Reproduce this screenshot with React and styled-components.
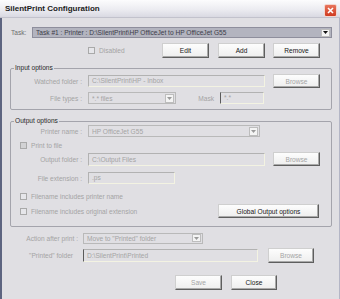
import styled, { createGlobalStyle } from 'styled-components'

const GlobalStyle = createGlobalStyle`
  html, body {
    margin: 0;
    padding: 0;
    background: #e0dfe3;
  }
  body {
    font-family: 'Liberation Sans', Arial, sans-serif;
  }
`

const Window = styled.div`
  width: 340px;
  height: 299px;
  display: flex;
  flex-direction: column;
  background: #e0dfe3;
  overflow: hidden;
  font-size: 6.6px;
`

const TitleBar = styled.div`
  height: 18px;
  flex: none;
  box-sizing: border-box;
  display: flex;
  align-items: center;
  justify-content: space-between;
  padding: 0 3px 0 5px;
  background: linear-gradient(#fcfcfd, #ececf1 55%, #d9d9e2);
  border-bottom: 1px solid #c2c2cc;
`

const Title = styled.span`
  font-size: 8px;
  font-weight: bold;
  color: #1c1c1c;
`

const CloseBox = styled.div`
  width: 13px;
  height: 13px;
  margin-top: 3px;
  box-sizing: border-box;
  border: 1px solid #f3d6cf;
  border-radius: 2px;
  background: linear-gradient(#e8745c, #cf3b20);
  display: flex;
  align-items: center;
  justify-content: center;
`

const Body = styled.div`
  flex: 1;
  border-left: 2px solid #5d6480;
  border-right: 1px solid #b4b6c6;
  padding: 0 7px 0 8px;
`

const Row = styled.div`
  display: flex;
  align-items: center;
  height: ${(p) => p.$h}px;
  margin-top: ${(p) => p.$mt || 0}px;
  padding-left: ${(p) => p.$pl || 0}px;
`

const TaskLabel = styled.span`
  width: 22px;
  padding-left: 1px;
  box-sizing: border-box;
  color: #6e6e6e;
`

const FieldLabel = styled.span`
  width: ${(p) => p.$w}px;
  padding-right: ${(p) => p.$gap || 6}px;
  box-sizing: border-box;
  text-align: right;
  white-space: nowrap;
  color: #a4a4a4;
`

const Combo = styled.div`
  width: ${(p) => p.$w}px;
  height: ${(p) => p.$h || 12}px;
  box-sizing: border-box;
  display: flex;
  align-items: center;
  border: 1px solid ${(p) => (p.$active ? '#8e8e9c' : '#b9b9b9')};
  background: ${(p) => (p.$active ? '#b3b4bf' : '#e0dfe3')};
  color: ${(p) => (p.$active ? '#3c3c48' : '#a4a4a4')};
  padding: 0 1px 0 3px;
  white-space: nowrap;
  overflow: hidden;
`

const ComboText = styled.span`
  flex: 1;
  overflow: hidden;
`

const Arrow = styled.span`
  width: 9px;
  height: ${(p) => p.$h || 8}px;
  flex: none;
  box-sizing: border-box;
  border: 1px solid #bdbdbd;
  background: #f4f4f4;
  display: flex;
  align-items: center;
  justify-content: center;
`

const TextBox = styled.div`
  width: ${(p) => p.$w}px;
  height: ${(p) => p.$h || 12}px;
  box-sizing: border-box;
  border: 1px solid;
  border-color: #b2b2b2 #f3f3e2 #f3f3e2 ${(p) => (p.$darkLeft ? '#5a5a5a' : '#b2b2b2')};
  padding-left: 3px;
  color: #a4a4a4;
  line-height: ${(p) => (p.$h || 12) - 2}px;
  white-space: nowrap;
  overflow: hidden;
`

const Button = styled.button`
  width: ${(p) => p.$w}px;
  height: ${(p) => p.$h || 15}px;
  margin-left: ${(p) => p.$ml || 0}px;
  padding: 0;
  flex: none;
  box-sizing: border-box;
  font: 6.6px 'Liberation Sans', Arial, sans-serif;
  color: ${(p) => (p.disabled ? '#a4a4a4' : '#161616')};
  background: linear-gradient(#fdfdfd, #eeeeee);
  border: 1px solid;
  border-color: #cfcfcf #5e5e5e #5e5e5e #cfcfcf;
  box-shadow: inset -1px -1px 0 #a9a9a9;
`

const CheckItem = styled.div`
  display: flex;
  align-items: center;
  width: ${(p) => (p.$w ? `${p.$w}px` : 'auto')};
  flex: none;
`

const CheckBox = styled.span`
  width: 7px;
  height: 7px;
  flex: none;
  box-sizing: border-box;
  border: 1px solid #a9a9a9;
  background: ${(p) => (p.$fill ? '#d2d2d4' : '#e6e6ea')};
`

const CheckLabel = styled.span`
  margin-left: 4px;
  color: #a4a4a4;
  white-space: nowrap;
`

const Group = styled.fieldset`
  width: 322px;
  box-sizing: border-box;
  margin: ${(p) => p.$mt}px 0 0;
  padding: 0 0 ${(p) => p.$pb}px;
  border: 1px solid #a4a4ac;
  border-radius: 2px;
  min-inline-size: 0;
`

const Legend = styled.legend`
  margin-left: 3px;
  padding: 0 1px;
  line-height: 8px;
  color: #2a2a2a;
`

const Triangle = ({ color }) => (
  <svg width="5" height="3" viewBox="0 0 5 3">
    <path d="M0 0H5L2.5 3Z" fill={color} />
  </svg>
)

export default function App() {
  return (
    <>
      <GlobalStyle />
      <Window>
        <TitleBar>
          <Title>SilentPrint Configuration</Title>
          <CloseBox>
            <svg width="7" height="7" viewBox="0 0 7 7">
              <path d="M1 1L6 6M6 1L1 6" stroke="#fff" strokeWidth="1.6" />
            </svg>
          </CloseBox>
        </TitleBar>
        <Body>
          <Row $h={11} $mt={9}>
            <TaskLabel>Task:</TaskLabel>
            <Combo $w={300} $h={11} $active>
              <ComboText>Task #1 : Printer : D:\SilentPrint\HP OfficeJet to HP OfficeJet G55</ComboText>
              <Arrow $h={8}>
                <Triangle color="#111" />
              </Arrow>
            </Combo>
          </Row>

          <Row $h={15} $mt={5} $pl={78}>
            <CheckItem $w={74}>
              <CheckBox />
              <CheckLabel>Disabled</CheckLabel>
            </CheckItem>
            <Button $w={47}>Edit</Button>
            <Button $w={47} $ml={9}>Add</Button>
            <Button $w={47} $ml={8}>Remove</Button>
          </Row>

          <Group $mt={6} $pb={4}>
            <Legend>Input options</Legend>
            <Row $h={14} $mt={2}>
              <FieldLabel $w={77}>Watched folder :</FieldLabel>
              <TextBox $w={177}>C:\SilentPrint\HP - Inbox</TextBox>
              <Button $w={47} $h={14} $ml={8} disabled>Browse</Button>
            </Row>
            <Row $h={14} $mt={3}>
              <FieldLabel $w={77}>File types :</FieldLabel>
              <Combo $w={88}>
                <ComboText>*.* files</ComboText>
                <Arrow $h={9}>
                  <Triangle color="#9a9a9a" />
                </Arrow>
              </Combo>
              <FieldLabel $w={44}>Mask</FieldLabel>
              <TextBox $w={44} $darkLeft>*.*</TextBox>
            </Row>
          </Group>

          <Group $mt={7} $pb={8}>
            <Legend>Output options</Legend>
            <Row $h={12}>
              <FieldLabel $w={77}>Printer name :</FieldLabel>
              <Combo $w={172}>
                <ComboText>HP OfficeJet G55</ComboText>
                <Arrow $h={9}>
                  <Triangle color="#9a9a9a" />
                </Arrow>
              </Combo>
            </Row>
            <Row $h={8} $mt={4} $pl={9}>
              <CheckItem>
                <CheckBox $fill />
                <CheckLabel>Print to file</CheckLabel>
              </CheckItem>
            </Row>
            <Row $h={14} $mt={3}>
              <FieldLabel $w={77}>Output folder :</FieldLabel>
              <TextBox $w={177} $h={13}>C:\Output Files</TextBox>
              <Button $w={47} $h={14} $ml={8} disabled>Browse</Button>
            </Row>
            <Row $h={12} $mt={6}>
              <FieldLabel $w={77}>File extension :</FieldLabel>
              <TextBox $w={87}>.ps</TextBox>
            </Row>
            <Row $h={8} $mt={8} $pl={9}>
              <CheckItem>
                <CheckBox />
                <CheckLabel>Filename includes printer name</CheckLabel>
              </CheckItem>
            </Row>
            <Row $h={14} $mt={4} $pl={9}>
              <CheckItem $w={198}>
                <CheckBox />
                <CheckLabel>Filename includes original extension</CheckLabel>
              </CheckItem>
              <Button $w={101} $h={14}>Global Output options</Button>
            </Row>
          </Group>

          <Row $h={12} $mt={5}>
            <FieldLabel $w={73} $gap={5}>Action after print :</FieldLabel>
            <Combo $w={120} $h={11}>
              <ComboText>Move to "Printed" folder</ComboText>
              <Arrow $h={8}>
                <Triangle color="#9a9a9a" />
              </Arrow>
            </Combo>
          </Row>
          <Row $h={15} $mt={4}>
            <FieldLabel $w={73} $gap={10}>"Printed" folder</FieldLabel>
            <TextBox $w={175} $h={13} $darkLeft>D:\SilentPrint\Printed</TextBox>
            <Button $w={46} $ml={10} disabled>Browse</Button>
          </Row>
          <Row $h={15} $mt={12} $pl={165}>
            <Button $w={47} disabled>Save</Button>
            <Button $w={46} $ml={9}>Close</Button>
          </Row>
        </Body>
      </Window>
    </>
  )
}
